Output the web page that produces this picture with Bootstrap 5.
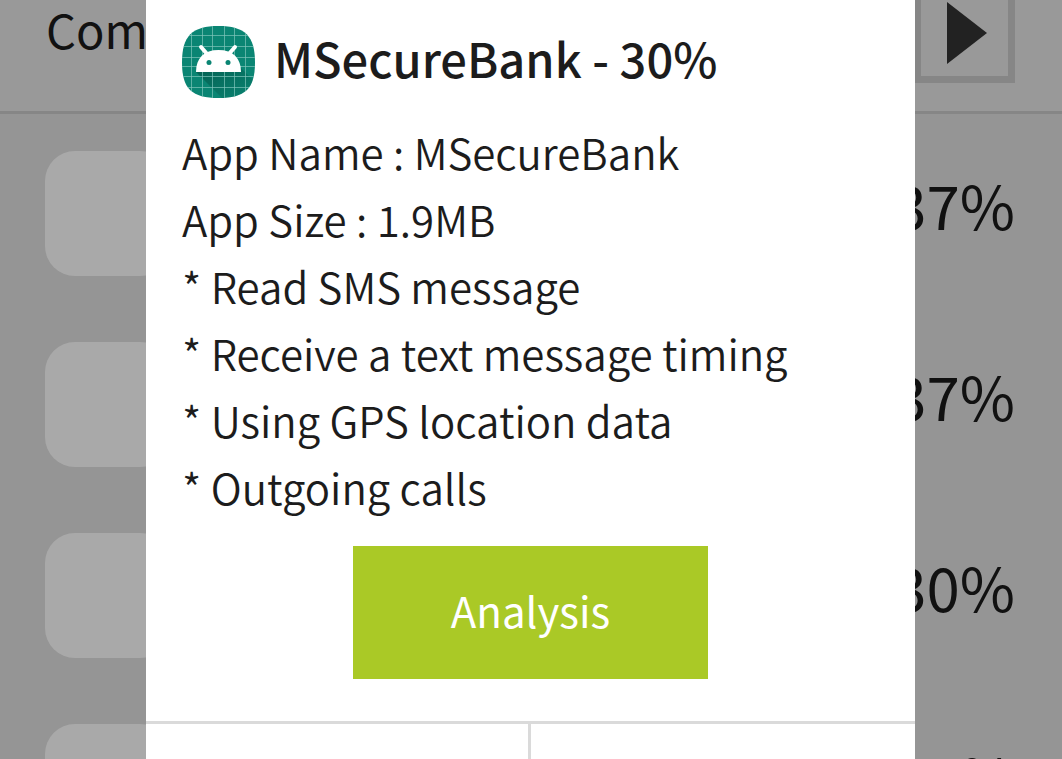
<!DOCTYPE html>
<html lang="en">
<head>
<meta charset="utf-8">
<meta name="viewport" content="width=device-width, initial-scale=1">
<title>MSecureBank</title>
<link rel="stylesheet" href="https://cdn.jsdelivr.net/npm/bootstrap@5.3.0/dist/css/bootstrap.min.css">
<style>
  body { font-family: "Noto Sans CJK KR", "Noto Sans", sans-serif; background: #959595; color: #1c1c1c; }
  .screen { height: 100vh; }
  .topbar { height: 114px; padding: 0 47px 28px 46px; background: #999; border-bottom: 3px solid #868686; color: #111; }
  .topbar-title { font-size: 47px; line-height: 64px; margin-bottom: 22px; font-weight: 400; }
  .play-btn { width: 101px; height: 101px; border: 7px solid #868686; background: #999; }
  .play-btn svg { margin-left: 4px; }
  .app-list { padding: 37px 47px 0 45px; gap: 66px; color: #111; }
  .app-row { height: 125px; }
  .app-tile { width: 125px; border-radius: 30px; background: #a9a9a9; }
  .app-score { font-size: 60px; line-height: 106px; }
  .sheet-wrap { padding: 0 147px 0 146px; }
  .sheet-head { padding: 26px 36px 19px; gap: 19px; }
  .sheet-title { font-size: 47px; line-height: 64px; font-weight: 500; }
  .detail-list { font-size: 42px; line-height: 67px; padding: 0 36px; font-weight: 350; }
  .analysis-btn { width: 355px; height: 133px; margin: 26px 0 42px; padding: 0 0 6px; font-size: 42px; background: #aac926; color: #fff; }
  .analysis-btn:hover { background: #9aba18; color: #fff; }
  .sheet-foot { border-top: 3px solid #dadada; }
  .foot-cell:first-child { border-right: 3px solid #dadada; }
</style>
</head>
<body>
<div class="screen position-relative overflow-hidden">
  <header class="topbar d-flex justify-content-between align-items-end overflow-hidden">
    <h1 class="topbar-title">Com</h1>
    <button type="button" class="play-btn flex-shrink-0 p-0 d-flex align-items-center justify-content-center" aria-label="Play">
      <svg width="40" height="62" viewBox="0 0 40 62" aria-hidden="true"><path d="M0 0L40 31L0 62Z" fill="#222"/></svg>
    </button>
  </header>
  <main>
    <ul class="app-list list-unstyled d-flex flex-column mb-0">
      <li class="app-row d-flex justify-content-between"><div class="app-tile"></div><span class="app-score">37%</span></li>
      <li class="app-row d-flex justify-content-between"><div class="app-tile"></div><span class="app-score">37%</span></li>
      <li class="app-row d-flex justify-content-between"><div class="app-tile"></div><span class="app-score">30%</span></li>
      <li class="app-row d-flex justify-content-between"><div class="app-tile"></div><span class="app-score">30%</span></li>
    </ul>
  </main>

  <div class="sheet-wrap position-absolute top-0 start-0 w-100 h-100">
    <section class="bg-white h-100 d-flex flex-column" role="dialog" aria-labelledby="sheetTitle">
      <div class="sheet-head d-flex align-items-start">
        <svg class="flex-shrink-0" width="73" height="73" viewBox="0 0 73 73" aria-hidden="true">
          <defs>
            <clipPath id="tile"><path d="M36.500 0C63 0 73 10 73 36.500S63 72 36.500 72S0 63 0 36.500S10 0 36.500 0Z"/></clipPath>
            <linearGradient id="shade" x1="0" y1="0" x2="1" y2="1"><stop offset="0" stop-color="#045f51"/><stop offset="1" stop-color="#045f51" stop-opacity="0"/></linearGradient>
          </defs>
          <g clip-path="url(#tile)">
            <path d="M0 0H73V73H0Z" fill="#0a8573"/>
            <path d="M14 46L41 73H73V56L57 40Z" fill="url(#shade)"/>
            <path d="M9.500 0V73M20.500 0V73M30.500 0V73M42.500 0V73M52.500 0V73M63.500 0V73M0 9.500H73M0 20.500H73M0 31.500H73M0 40.500H73M0 50.500H73M0 61.500H73" stroke="#7fc4ba" stroke-opacity=".7" fill="none"/>
            <path d="M14 46C14 32 22 24 36.500 24S59 32 59 46Z" fill="#fff"/>
            <path d="M19 21L26 29M53 21L46 29" stroke="#fff" stroke-width="4" stroke-linecap="round"/>
            <circle cx="27" cy="36.500" r="2.500" fill="#0a8573"/><circle cx="46" cy="36.500" r="2.500" fill="#0a8573"/>
          </g>
        </svg>
        <h2 class="sheet-title mb-0" id="sheetTitle">MSecureBank - 30%</h2>
      </div>
      <ul class="detail-list list-unstyled mb-0">
        <li>App Name : MSecureBank</li>
        <li>App Size : 1.9MB</li>
        <li>* Read SMS message</li>
        <li>* Receive a text message timing</li>
        <li>* Using GPS location data</li>
        <li>* Outgoing calls</li>
      </ul>
      <button type="button" class="analysis-btn btn rounded-0 border-0 align-self-center flex-shrink-0">Analysis</button>
      <div class="sheet-foot d-flex flex-grow-1">
        <div class="foot-cell w-50"></div>
        <div class="foot-cell w-50"></div>
      </div>
    </section>
  </div>
</div>
<script src="https://cdn.jsdelivr.net/npm/bootstrap@5.3.0/dist/js/bootstrap.bundle.min.js"></script>
</body>
</html>
